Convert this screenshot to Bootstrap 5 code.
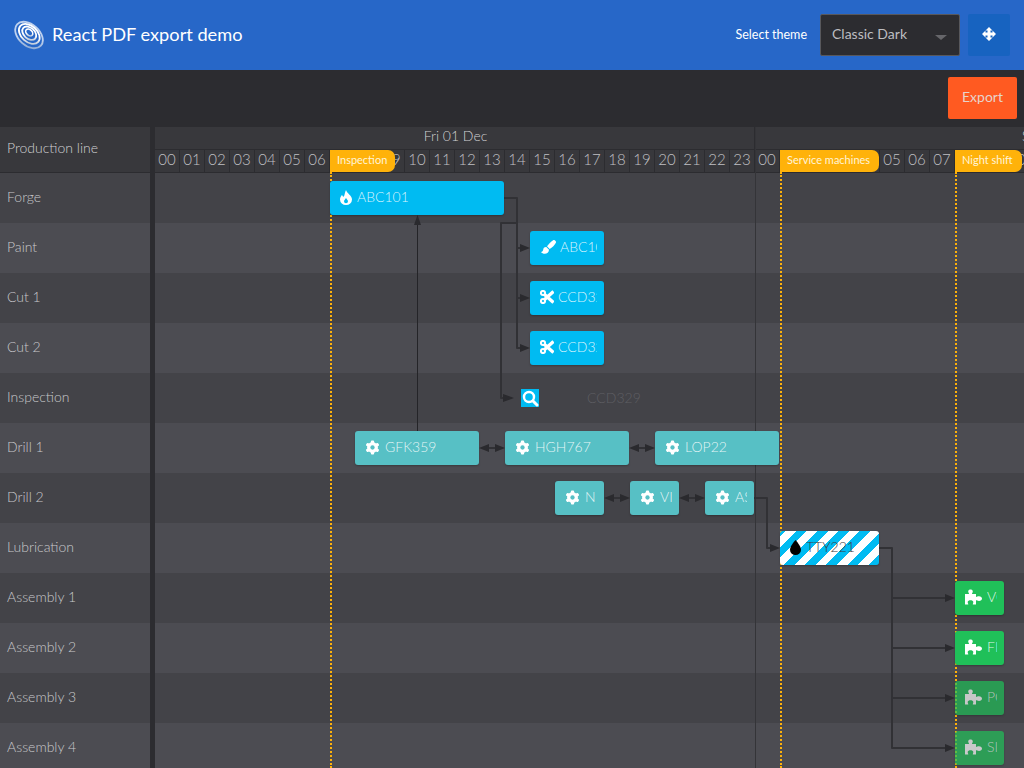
<!DOCTYPE html>
<html lang="en">
<head>
<meta charset="utf-8">
<title>React PDF export demo</title>
<link rel="stylesheet" href="https://cdn.jsdelivr.net/npm/bootstrap@5.3.0/dist/css/bootstrap.min.css">
<style>
html,body{height:100%;overflow:hidden}
body{font-family:Lato,"Liberation Sans",sans-serif;background:#2c2c30;color:#bdbdc0;font-size:14px}
.app-top{height:70px;background:#2767c8;padding:0 14px}
.app-logo{width:30px;height:32px}
.app-title{font-size:18.200px;color:#fff;margin:0 0 2px 8px;line-height:1}
.theme-label{font-size:12.500px;color:#fff;margin-right:13px}
.theme-pick{width:140px;height:42px;background:#2c2c30;border:1px solid #58585c;border-radius:2px;color:#bdbdc0;font-size:14px;padding:0 12px 4px 11px}
.theme-pick:hover,.theme-pick:focus{background:#2c2c30;color:#bdbdc0;border-color:#58585c}
.theme-pick::after{margin:8px 0 0;border-top:5px solid #66666a;border-left:6px solid transparent;border-right:6px solid transparent;border-bottom:0}
.move-btn{width:42px;height:42px;background:#1763c0;border:0;border-radius:2px;margin-left:8px;padding:0 0 2px;margin-right:0}
.tool-strip{height:57px;background:#2c2c30;padding:7px 7px 8px 0}
.export-btn{width:69px;height:42px;background:#ff5a21;border:0;border-radius:2px;color:#e8d3cb;font-size:14px;padding:0 0 3px}
.export-btn:hover{background:#ff5a21;color:#e8d3cb}
.sched{height:641px;overflow:hidden}
.res-col{width:150px;flex:none}
.res-head{height:46px;background:#38383c;border-bottom:1px solid #2c2c30;padding:0 7px 5px;color:#d0d0d2;font-weight:300}
.res-row{height:50px;padding:0 7px 4px;font-size:14px;color:#c8c8cb;font-weight:300}
.stripe-a{background:#434348}
.stripe-b{background:#4c4c52}
.split-bar{width:5px;flex:none;background:#2c2c30}
.plane{flex:1 1 auto;min-width:0;position:relative;overflow:hidden}
.date-row{height:22px;background:#38383c;width:1200px}
.date-cell{width:600px;flex:none;font-size:14px;font-weight:300;line-height:17px;text-align:center;color:#d0d0d2;border-right:1px solid #2c2c30;padding-left:2px}
.hour-row{height:24px;background:#38383c;width:1200px;border-top:1px solid #2c2c30;border-bottom:1px solid #2c2c30}
.hour-cell{width:25px;flex:none;font-size:15px;line-height:18px;text-align:center;color:#c0c0c4;border-right:1px solid #2c2c30;font-weight:300}
.lane{height:50px;width:1200px}
.day-line{position:absolute;left:600px;top:0;bottom:0;width:1px;background:#343438}
.time-line{position:absolute;top:45px;bottom:0;border-left:2px dotted #ffb20a;width:0}
.time-tag{position:absolute;top:23px;height:22px;background:#ffb20a;color:#fff4d8;font-size:11px;line-height:20px;padding-left:7px;border-radius:0 7px 7px 0;white-space:nowrap}
.link-layer{position:absolute;left:0;top:0;width:869px;height:641px}
.task{position:absolute;height:34px;border-radius:3px;display:flex;align-items:center;padding:0 7px 2px 10px;box-shadow:0 1px 2px rgba(0,0,0,.25);color:rgba(255,255,255,.85);font-size:14px;font-weight:300;white-space:nowrap}
.task-text{flex:1 1 auto;min-width:0;overflow:hidden;margin-bottom:2px}
.task svg{flex:none;margin-right:5px}
.task svg.tight-icon{margin-right:4px}
.tone-blue{background:#00bbf2}
.tone-teal{background:#57c0c5}
.tone-green{background:#20c059}
.tone-faded{opacity:.7}
.tone-stripe{background:repeating-linear-gradient(-45deg,#00bbf2 0 7.500px,#fff 7.500px 15px);color:#3c3c40}
.probe{position:absolute;height:18px;width:18px;background:#00bbf2;display:flex;align-items:center;justify-content:center}
.probe-text{position:absolute;color:#5e5e63;font-size:14px;font-weight:300}
</style>
</head>
<body>
<svg width="0" height="0" class="d-block" aria-hidden="true">
<defs><linearGradient id="logo-shade" x1="0" y1="0" x2="1" y2="1"><stop offset="0" stop-color="#fff"/><stop offset=".6" stop-color="#fff"/><stop offset="1" stop-color="#9fb0c8"/></linearGradient></defs>
<symbol id="i-fire" viewBox="0 0 12 15"><path fill="#fff" fill-rule="evenodd" d="M6 0C6.600 3 12 5.500 12 9.500A6 5.500 0 0 1 0 9.500C0 7.500 1.300 6 2 4.800C2.400 6 3 6.800 3.800 6.800C4.800 5 4.800 2 6 0ZM6 8C5 9.800 4 10.200 4 11.300A2 2 0 0 0 8 11.300C8 10.200 7 9.800 6 8Z"/></symbol>
<symbol id="i-brush" viewBox="0 0 15 14"><path fill="#fff" d="M12.500 0C13.500 -.3 15.300 1 15 2.500C14 5 11 7.500 8.700 9L6 6.300C8 4 10 1.300 12.500 0ZM5.300 7C3 7 2.300 8.300 2.200 9.700C2 11 1.300 11.700 0 12C1.500 14.500 8 14.800 8 9.700Z"/></symbol>
<symbol id="i-cut" viewBox="0 0 14 14"><g fill="none" stroke="#fff"><circle cx="3" cy="3" r="2.100" stroke-width="2"/><circle cx="3" cy="11" r="2.100" stroke-width="2"/><path stroke-width="3.400" d="M4.500 4.500L13.500 12.500M4.500 9.500L13.500 1.500"/></g></symbol>
<symbol id="i-search" viewBox="0 0 18 18"><g fill="none" stroke="#fff"><circle cx="8" cy="8" r="5" stroke-width="2.400"/><path stroke-width="3" stroke-linecap="round" d="M12 12L16 16"/></g></symbol>
<symbol id="i-gear" viewBox="0 0 16 16"><g fill="#fff"><path fill-rule="evenodd" d="M8 2.200A5.800 5.800 0 1 1 8 13.800A5.800 5.800 0 1 1 8 2.200ZM8 5.800A2.200 2.200 0 1 0 8 10.200A2.200 2.200 0 1 0 8 5.800Z"/><rect x="6.300" y="0.500" width="3.400" height="15" rx="1"/><rect x="6.300" y="0.500" width="3.400" height="15" rx="1" transform="rotate(60 8 8)"/><rect x="6.300" y="0.500" width="3.400" height="15" rx="1" transform="rotate(120 8 8)"/></g><circle cx="8" cy="8" r="2.300" fill="#57c0c5"/></symbol>
<symbol id="i-drop" viewBox="0 0 11 15"><path fill="#000" d="M5.500 0C5.500 0 11 6 11 9.700A5.500 5.300 0 0 1 0 9.700C0 6 5.500 0 5.500 0Z"/></symbol>
<symbol id="i-piece" viewBox="0 0 17 16"><path fill="currentColor" d="M0 5H4C4 4 3.200 3.500 3.200 2.500C3.200 1 4.500 .5 5.500 .5C6.500 .5 7.800 1 7.800 2.500C7.800 3.500 7 4 7 5H11V8C12 8 12.500 7.300 14 7.300C15.800 7.300 17 8.300 17 9.600C17 11 15.800 12 14 12C12.500 12 12 11.300 11 11.300V15.500H7.800C7.800 14.500 8.300 14 8.300 13C8.300 11.800 6.800 11.300 5.500 11.300C4.200 11.300 2.700 11.800 2.700 13C2.700 14 3.300 14.500 3.300 15.500H0Z"/></symbol>
<symbol id="i-move" viewBox="0 0 16 16"><path fill="#fff" d="M8 0L12 4H9.700V6.300H12V4L16 8L12 12V9.700H9.700V12H12L8 16L4 12H6.300V9.700H4V12L0 8L4 4V6.300H6.300V4H4Z"/></symbol>
</svg>

<nav class="navbar app-top d-flex align-items-center flex-nowrap">
  <div class="d-flex align-items-center">
    <svg class="app-logo" viewBox="0 0 30 32" aria-hidden="true">
      <g fill="none" stroke="url(#logo-shade)" transform="rotate(42 15 16)">
        <ellipse cx="15" cy="16" rx="16" ry="10.500" stroke-width="1.800" opacity=".7"/>
        <ellipse cx="14.500" cy="15" rx="12" ry="8" stroke-width="1.800"/>
        <ellipse cx="14" cy="14.500" rx="8" ry="5.500" stroke-width="1.800"/>
        <ellipse cx="13.500" cy="14" rx="4" ry="2.800" stroke-width="1.600"/>
      </g>
    </svg>
    <span class="app-title">React PDF export demo</span>
  </div>
  <div class="d-flex align-items-center">
    <span class="theme-label">Select theme</span>
    <button type="button" class="btn dropdown-toggle theme-pick d-flex align-items-center justify-content-between">Classic Dark</button>
    <button type="button" class="btn move-btn d-flex align-items-center justify-content-center" aria-label="Move"><svg width="14" height="14"><use href="#i-move"/></svg></button>
  </div>
</nav>

<div class="tool-strip d-flex justify-content-end">
  <button type="button" class="btn export-btn">Export</button>
</div>

<div class="sched d-flex">
  <div class="res-col">
    <div class="res-head d-flex align-items-center">Production line</div>
    <div class="res-row stripe-a d-flex align-items-center">Forge</div>
    <div class="res-row stripe-b d-flex align-items-center">Paint</div>
    <div class="res-row stripe-a d-flex align-items-center">Cut 1</div>
    <div class="res-row stripe-b d-flex align-items-center">Cut 2</div>
    <div class="res-row stripe-a d-flex align-items-center">Inspection</div>
    <div class="res-row stripe-b d-flex align-items-center">Drill 1</div>
    <div class="res-row stripe-a d-flex align-items-center">Drill 2</div>
    <div class="res-row stripe-b d-flex align-items-center">Lubrication</div>
    <div class="res-row stripe-a d-flex align-items-center">Assembly 1</div>
    <div class="res-row stripe-b d-flex align-items-center">Assembly 2</div>
    <div class="res-row stripe-a d-flex align-items-center">Assembly 3</div>
    <div class="res-row stripe-b d-flex align-items-center">Assembly 4</div>
  </div>
  <div class="split-bar"></div>
  <div class="plane">
    <div class="date-row d-flex"><div class="date-cell">Fri 01 Dec</div><div class="date-cell">Sat 02 Dec</div></div>
    <div class="hour-row d-flex">
      <div class="hour-cell">00</div><div class="hour-cell">01</div><div class="hour-cell">02</div><div class="hour-cell">03</div><div class="hour-cell">04</div><div class="hour-cell">05</div><div class="hour-cell">06</div><div class="hour-cell">07</div><div class="hour-cell">08</div><div class="hour-cell">09</div><div class="hour-cell">10</div><div class="hour-cell">11</div><div class="hour-cell">12</div><div class="hour-cell">13</div><div class="hour-cell">14</div><div class="hour-cell">15</div><div class="hour-cell">16</div><div class="hour-cell">17</div><div class="hour-cell">18</div><div class="hour-cell">19</div><div class="hour-cell">20</div><div class="hour-cell">21</div><div class="hour-cell">22</div><div class="hour-cell">23</div>
      <div class="hour-cell">00</div><div class="hour-cell">01</div><div class="hour-cell">02</div><div class="hour-cell">03</div><div class="hour-cell">04</div><div class="hour-cell">05</div><div class="hour-cell">06</div><div class="hour-cell">07</div><div class="hour-cell">08</div><div class="hour-cell">09</div><div class="hour-cell">10</div>
    </div>
    <div class="lane stripe-a"></div><div class="lane stripe-b"></div><div class="lane stripe-a"></div><div class="lane stripe-b"></div><div class="lane stripe-a"></div><div class="lane stripe-b"></div><div class="lane stripe-a"></div><div class="lane stripe-b"></div><div class="lane stripe-a"></div><div class="lane stripe-b"></div><div class="lane stripe-a"></div><div class="lane stripe-b"></div>

    <div class="day-line"></div>

    <div class="time-line" style="left:175px"></div>
    <div class="time-line" style="left:625px"></div>
    <div class="time-line" style="left:800px"></div>
    <div class="time-tag" style="left:175px;width:65px">Inspection</div>
    <div class="time-tag" style="left:625px;width:99px">Service machines</div>
    <div class="time-tag" style="left:800px;width:67px">Night shift</div>

    <svg class="link-layer" viewBox="155 127 869 641" aria-hidden="true">
      <g fill="none" stroke="#313135" stroke-width="2" stroke-linejoin="round">
        <path d="M504 198H517V348H522M517 248H522M517 298H522M517 223H501V398H506"/>
        <path d="M754 498H767V548H772"/>
        <path d="M879 548H892V748H947M892 598H947M892 648H947M892 698H947"/>
        <path d="M487 448H497M637 448H647M612 498H622M687 498H697"/>
      </g>
      <path fill="none" stroke="#242428" d="M417.500 224V431"/>
      <g fill="#2a2a2e">
        <path d="M417.500 215L421 225H414Z"/>
        <path d="M530 248L520 244V252ZM530 298L520 294V302ZM530 348L520 344V352ZM514 398L503 394V402Z"/>
        <path d="M780 548L770 544V552ZM955 598L945 594V602ZM955 648L945 644V652ZM955 698L945 694V702ZM955 748L945 744V752Z"/>
        <path d="M479 448L489 444V452ZM505 448L495 444V452ZM629 448L639 444V452ZM655 448L645 444V452Z"/>
        <path d="M604 498L614 494V502ZM630 498L620 494V502ZM679 498L689 494V502ZM705 498L695 494V502Z"/>
      </g>
    </svg>

    <div class="task tone-blue" style="left:175px;top:54px;width:174px"><svg width="12" height="15"><use href="#i-fire"/></svg><span class="task-text">ABC101</span></div>
    <div class="task tone-blue" style="left:375px;top:104px;width:74px;padding-left:11px"><svg width="15" height="14" class="tight-icon"><use href="#i-brush"/></svg><span class="task-text">ABC101</span></div>
    <div class="task tone-blue" style="left:375px;top:154px;width:74px"><svg width="14" height="14" class="tight-icon"><use href="#i-cut"/></svg><span class="task-text">CCD329</span></div>
    <div class="task tone-blue" style="left:375px;top:204px;width:74px"><svg width="14" height="14" class="tight-icon"><use href="#i-cut"/></svg><span class="task-text">CCD329</span></div>
    <div class="probe" style="left:366px;top:262px"><svg width="18" height="18"><use href="#i-search"/></svg></div>
    <div class="probe-text" style="left:432px;top:260px">CCD329</div>
    <div class="task tone-teal" style="left:200px;top:304px;width:124px"><svg width="15" height="15"><use href="#i-gear"/></svg><span class="task-text">GFK359</span></div>
    <div class="task tone-teal" style="left:350px;top:304px;width:124px"><svg width="15" height="15"><use href="#i-gear"/></svg><span class="task-text">HGH767</span></div>
    <div class="task tone-teal" style="left:500px;top:304px;width:124px"><svg width="15" height="15"><use href="#i-gear"/></svg><span class="task-text">LOP22</span></div>
    <div class="task tone-teal" style="left:400px;top:354px;width:49px"><svg width="15" height="15"><use href="#i-gear"/></svg><span class="task-text">N</span></div>
    <div class="task tone-teal" style="left:475px;top:354px;width:49px"><svg width="15" height="15"><use href="#i-gear"/></svg><span class="task-text">VIP44</span></div>
    <div class="task tone-teal" style="left:550px;top:354px;width:49px"><svg width="15" height="15"><use href="#i-gear"/></svg><span class="task-text">ASD33</span></div>
    <div class="task tone-stripe" style="left:625px;top:404px;width:99px"><svg width="11" height="15"><use href="#i-drop"/></svg><span class="task-text">TTY221</span></div>
    <div class="task tone-green" style="left:800px;top:454px;width:49px"><svg width="17" height="16" class="text-white"><use href="#i-piece"/></svg><span class="task-text">VGB</span></div>
    <div class="task tone-green" style="left:800px;top:504px;width:49px"><svg width="17" height="16" class="text-white"><use href="#i-piece"/></svg><span class="task-text">FIL</span></div>
    <div class="task tone-green tone-faded" style="left:800px;top:554px;width:49px"><svg width="17" height="16" class="text-white"><use href="#i-piece"/></svg><span class="task-text">PO</span></div>
    <div class="task tone-green tone-faded" style="left:800px;top:604px;width:49px"><svg width="17" height="16" class="text-white"><use href="#i-piece"/></svg><span class="task-text">SI</span></div>
  </div>
</div>
<script src="https://cdn.jsdelivr.net/npm/bootstrap@5.3.0/dist/js/bootstrap.bundle.min.js"></script>
</body>
</html>
